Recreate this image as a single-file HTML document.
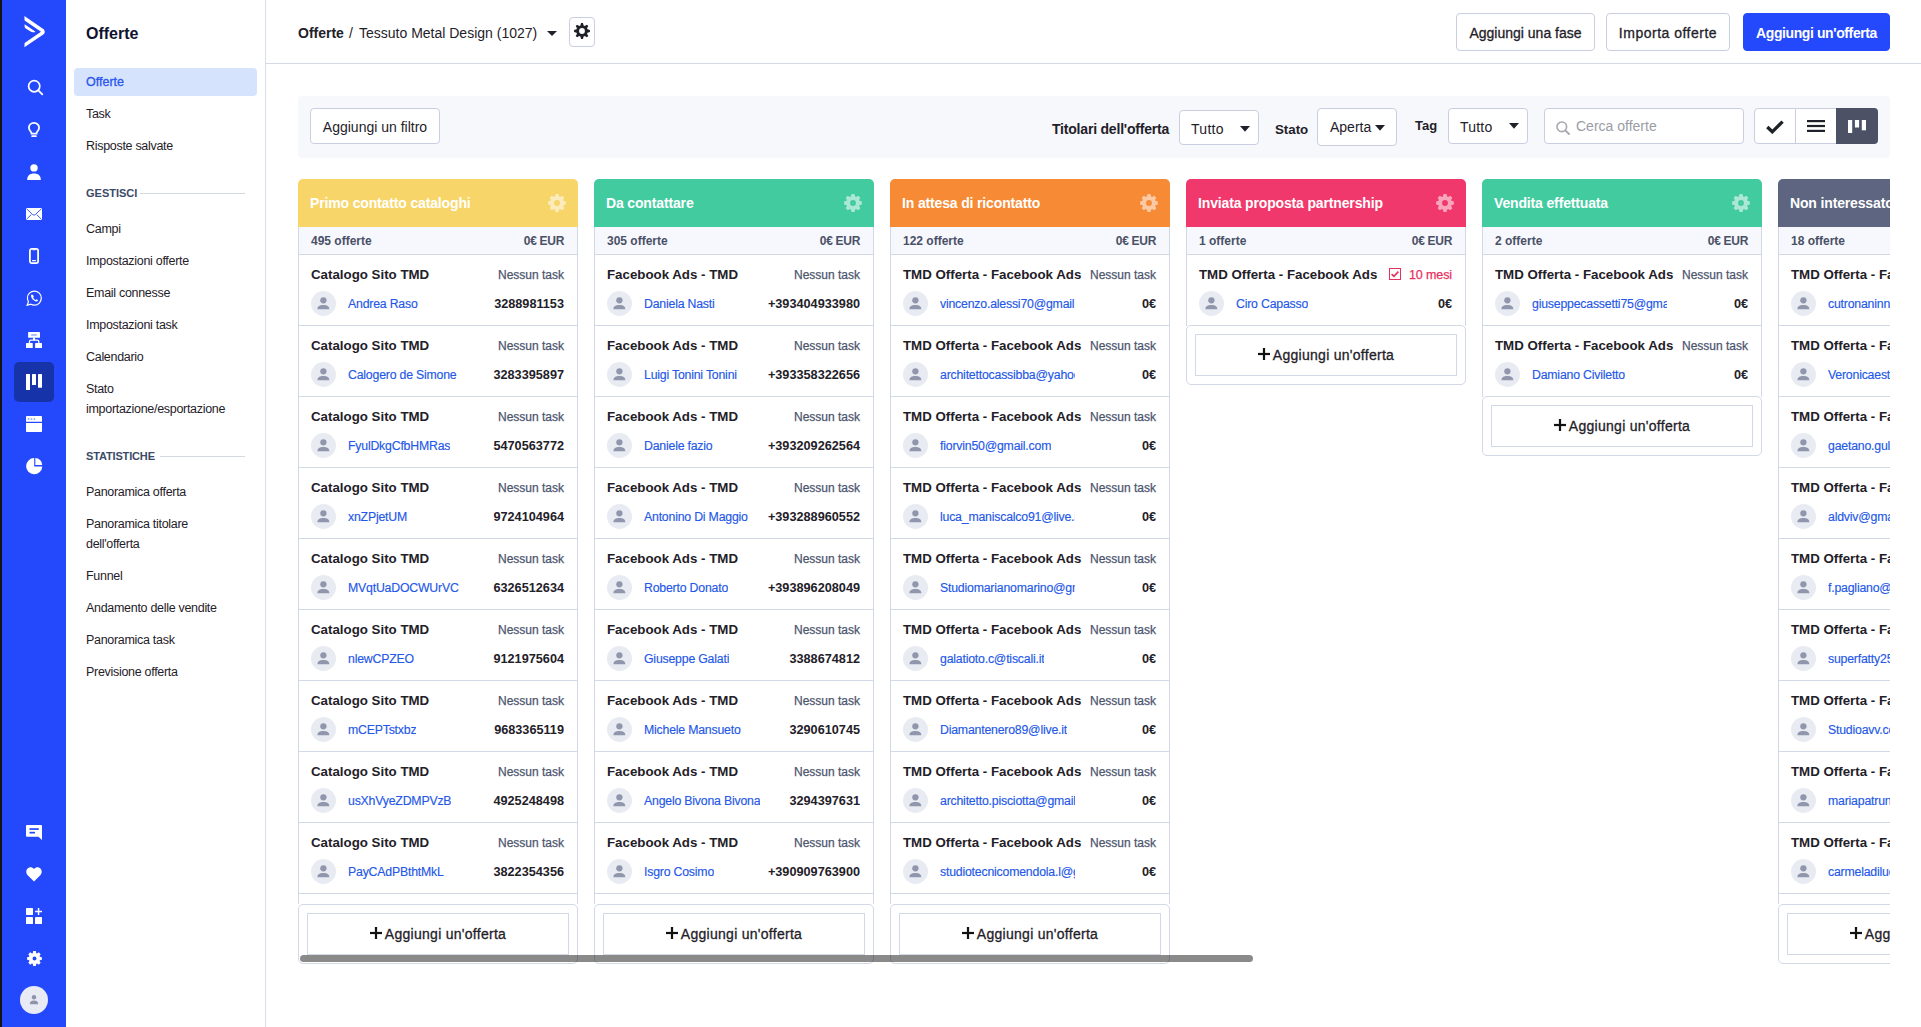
<!DOCTYPE html>
<html><head><meta charset="utf-8"><title>Offerte</title><style>
*{box-sizing:border-box;margin:0;padding:0}
html,body{width:1921px;height:1027px;overflow:hidden;background:#fff;font-family:"Liberation Sans", sans-serif;color:#1f2129}
.abs{position:absolute}
#strip{left:0;top:0;width:2px;height:1027px;background:#141414}
#rail{left:2px;top:0;width:64px;height:1027px;background:#2449fd}
.ri{position:absolute;left:0;width:64px;height:40px;display:flex;align-items:center;justify-content:center}
.ri svg{display:block}
#sub{left:66px;top:0;width:200px;height:1027px;border-right:1px solid #d9dde8;background:#fff}
.nt{position:absolute;left:20px;font-size:12.5px;letter-spacing:-0.3px;color:#1f2129;line-height:20px;white-space:nowrap}
.sec{position:absolute;left:20px;font-size:11px;font-weight:bold;color:#3b4a68;letter-spacing:0px;line-height:14px}
.secl{position:absolute;height:1px;background:#d3d8e3}
#hdr{left:266px;top:0;width:1655px;height:64px;border-bottom:1px solid #d5d9e6}
.btn{position:absolute;border:1px solid #c9cee0;border-radius:4px;background:#fff;font-size:14px;color:#1f2129;display:flex;align-items:center;justify-content:center;white-space:nowrap}
.med{-webkit-text-stroke:0.3px currentColor}
#fbar{left:298px;top:96px;width:1592px;height:62px;background:#f7f8fc;border-radius:4px}
.col{position:absolute;top:179px;width:280px}
.ch{position:absolute;left:0;top:0;width:280px;height:48px;border-radius:5px 5px 0 0;color:#fff;font-weight:bold;font-size:14px;letter-spacing:-0.15px;line-height:48px;padding-left:12px;white-space:nowrap;overflow:hidden}
.ch svg{position:absolute;right:12px;top:15px}
.cb{position:absolute;left:0;top:48px;width:280px;border-left:1px solid #d3d8e6;border-right:1px solid #d3d8e6;overflow:hidden}
.st{height:28px;background:#f7f8fd;border-bottom:1px solid #d3d8e6;position:relative;font-weight:bold;font-size:12px;color:#4a5066}
.st .l{position:absolute;left:12px;top:7px;line-height:14px}
.st .r{position:absolute;right:13px;top:7px;line-height:14px;font-size:12px;letter-spacing:-0.3px}
.cd{height:71px;border-bottom:1px solid #d3d8e6;position:relative;background:#fff}
.cd .t{position:absolute;left:12px;top:12px;font-weight:bold;font-size:13.3px;line-height:16px;white-space:nowrap;color:#1f2129}
.cd .k{position:absolute;right:13px;top:12px;font-size:12px;line-height:16px;color:#4d556e;-webkit-text-stroke:0.25px currentColor;white-space:nowrap;background:#fff}
.cd .av{position:absolute;left:12px;top:36px;width:25px;height:25px;border-radius:50%;background:#e9ebf3}
.cd .av svg{position:absolute;left:0;top:0}
.cd .n{position:absolute;left:49px;top:41px;font-size:12.3px;letter-spacing:-0.2px;line-height:16px;color:#2458e8;-webkit-text-stroke:0.15px currentColor;white-space:nowrap;overflow:hidden;max-width:135px}
.cd .p{position:absolute;right:13px;top:41px;font-weight:bold;font-size:12.7px;line-height:16px;color:#1f2129;white-space:nowrap}
.add{position:absolute;left:0;width:280px;height:60px;border:1px solid #d3d8e6;border-radius:5px;background:#fff}
.add .ib{position:absolute;left:8px;top:8px;width:262px;height:42px;border:1px solid #d3d8e6;display:flex;align-items:center;justify-content:center;font-size:14px;color:#1f2129;white-space:nowrap}
#sb{left:300px;top:955px;width:953px;height:7px;border-radius:4px;background:rgba(0,0,0,0.46)}
</style></head><body>
<div id="strip" class="abs"></div>
<div id="rail" class="abs"></div><svg class="abs" style="left:18px;top:12px" width="32" height="40" viewBox="18 12 32 40"><path d="M24.4,16.1 L44.0,29.5 Q45.6,31.8 44.0,34.1 L24.4,47.3 L24.6,42.9 L41.0,31.8 L24.6,20.6 Z" fill="#fff"/><path d="M24.6,24.3 L34.5,30.9 Q36.0,32.3 34.2,32.3 L32.8,32.3 Q31.6,32.2 30.6,31.6 L25.8,28.4 Q24.6,27.6 24.6,26.6 Z" fill="#fff"/></svg>
<svg class="abs" style="left:27px;top:79px" width="17" height="17" viewBox="0 0 17 17"><circle cx="7.2" cy="7.2" r="5.6" fill="none" stroke="#fff" stroke-width="1.7"/><path d="M11.3,11.3 L15.3,15.3" stroke="#fff" stroke-width="1.9" stroke-linecap="round"/></svg>
<svg class="abs" style="left:28px;top:122px" width="12" height="16" viewBox="0 0 12 16"><path d="M6,0.9 C3,0.9 0.9,3.1 0.9,5.8 C0.9,7.7 2,8.9 3,10 C3.4,10.5 3.5,11 3.5,11.6 L8.5,11.6 C8.5,11 8.6,10.5 9,10 C10,8.9 11.1,7.7 11.1,5.8 C11.1,3.1 9,0.9 6,0.9Z" fill="none" stroke="#fff" stroke-width="1.8"/><rect x="3.3" y="13.3" width="5.4" height="1.8" rx="0.6" fill="#fff"/></svg>
<svg class="abs" style="left:27px;top:164px" width="14" height="16" viewBox="0 0 14 16"><circle cx="7" cy="3.9" r="3.7" fill="#fff"/><path d="M0.2,16 C0.2,11.6 2.9,9.6 7,9.6 C11.1,9.6 13.8,11.6 13.8,16Z" fill="#fff"/></svg>
<svg class="abs" style="left:26px;top:208px" width="16" height="12" viewBox="0 0 16 12"><rect x="0" y="0" width="16" height="12" rx="1" fill="#fff"/><path d="M0.6,0.8 L6.7,6.6 Q8,7.7 9.3,6.6 L15.4,0.8 M0.6,11.2 L5.3,6.6 M15.4,11.2 L10.7,6.6" fill="none" stroke="#2449fd" stroke-width="0.9"/></svg>
<svg class="abs" style="left:29px;top:248px" width="10" height="16" viewBox="0 0 10 16"><rect x="0.9" y="0.9" width="8.2" height="14.2" rx="1.9" fill="none" stroke="#fff" stroke-width="1.8"/><rect x="3.4" y="1.2" width="3.2" height="1.1" rx="0.5" fill="#fff"/><rect x="3" y="12" width="4" height="1.2" rx="0.5" fill="#fff"/></svg>
<svg class="abs" style="left:26px;top:290px" width="16" height="16" viewBox="0 0 16 16"><path d="M8.4,1.1 C4.5,1.1 1.4,4.2 1.4,8 C1.4,9.3 1.8,10.6 2.5,11.7 L1.1,15.3 L4.9,14.2 C5.9,14.8 7.1,15.1 8.4,15.1 C12.3,15.1 15.3,12 15.3,8.1 C15.3,4.2 12.3,1.1 8.4,1.1Z" fill="none" stroke="#fff" stroke-width="1.2"/><path d="M5.8,4.6 C5.2,4.9 4.9,5.6 5.1,6.5 C5.5,8.5 7.5,10.7 9.8,11.4 C10.8,11.7 11.5,11.3 11.8,10.7 L11.9,10.1 L10.4,9.3 L9.7,10 C8.6,9.5 7.6,8.5 7.1,7.4 L7.8,6.7 L7,5.1Z" fill="#fff"/></svg>
<svg class="abs" style="left:26px;top:332px" width="16" height="16" viewBox="0 0 16 16"><rect x="2.1" y="0.1" width="11.9" height="5.7" rx="0.6" fill="#fff"/><rect x="5.1" y="2.2" width="5.7" height="1.5" fill="#94acff"/><rect x="7" y="5.7" width="2" height="2.6" fill="#fff"/><path d="M3.5,11.2 L3.5,9.6 Q3.5,8.2 4.9,8.2 L11.4,8.2 Q12.8,8.2 12.8,9.6 L12.8,11.2" fill="none" stroke="#fff" stroke-width="1.3"/><rect x="0" y="11.1" width="6.75" height="4.9" rx="0.6" fill="#fff"/><rect x="9.1" y="11.1" width="6.9" height="4.9" rx="0.6" fill="#fff"/></svg>
<div class="abs" style="left:14px;top:362px;width:40px;height:40px;border-radius:5px;background:#1633a9"></div>
<svg class="abs" style="left:26px;top:374px" width="16" height="16" viewBox="0 0 16 16"><rect x="0" y="0" width="4" height="16" fill="#fff"/><rect x="6" y="0" width="4" height="11" rx="0.6" fill="#fff"/><rect x="12" y="0" width="4" height="13.7" rx="0.6" fill="#fff"/></svg>
<svg class="abs" style="left:26px;top:416px" width="16" height="16" viewBox="0 0 16 16"><path d="M0.8,0 L15.2,0 Q16,0 16,0.8 L16,5.8 L0,5.8 L0,0.8 Q0,0 0.8,0Z" fill="#fff"/><path d="M0,7.1 L16,7.1 L16,15.2 Q16,16 15.2,16 L0.8,16 Q0,16 0,15.2Z" fill="#fff"/><rect x="1.8" y="2.2" width="1.6" height="1.6" rx="0.4" fill="#7f97ff"/><rect x="4.7" y="2.2" width="1.6" height="1.6" rx="0.4" fill="#7f97ff"/><rect x="7.6" y="2.2" width="1.6" height="1.6" rx="0.4" fill="#7f97ff"/></svg>
<svg class="abs" style="left:26px;top:458px" width="17" height="17" viewBox="0 0 17 17"><path d="M8.2,0.1 L8.2,8.5 L16.3,8.5 A8.1,8.1 0 1 1 8.2,0.1Z" fill="#fff"/><path d="M9.3,0 A7.2,7.2 0 0 1 16.2,6.9 L9.3,6.9Z" fill="#fff"/></svg>
<svg class="abs" style="left:26px;top:825px" width="16" height="15" viewBox="0 0 16 15"><path d="M1,0 L15,0 Q16,0 16,1 L16,15 L12.5,11.8 L1,11.8 Q0,11.8 0,10.8 L0,1 Q0,0 1,0Z" fill="#fff"/><rect x="3.5" y="3.2" width="9.3" height="1.7" fill="#2449fd"/><rect x="3.5" y="6.8" width="5.5" height="1.7" fill="#2449fd"/></svg>
<svg class="abs" style="left:26px;top:867px" width="16" height="15" viewBox="0 0 16 15"><path d="M8,14.4 L1.7,8.2 C-0.3,6.2 -0.1,2.9 1.9,1.2 C3.8,-0.3 6.4,0.2 8,2.1 C9.6,0.2 12.2,-0.3 14.1,1.2 C16.1,2.9 16.3,6.2 14.3,8.2Z" fill="#fff"/></svg>
<svg class="abs" style="left:26px;top:908px" width="16" height="16" viewBox="0 0 16 16"><rect x="0" y="0" width="7" height="7" rx="0.4" fill="#fff"/><rect x="0" y="9" width="7" height="7" rx="0.4" fill="#fff"/><rect x="9" y="9" width="7" height="7" rx="0.4" fill="#fff"/><rect x="11.8" y="0" width="1.5" height="7" fill="#fff"/><rect x="9.1" y="2.75" width="7" height="1.5" fill="#fff"/></svg>
<svg class="abs" style="left:26.5px;top:950.5px" width="15" height="15" viewBox="0 0 16 16"><path fill-rule="evenodd" fill="#fff" d="M6.15,2.29 L6.59,0.12 L9.41,0.12 L9.85,2.29 L10.08,2.37 L10.30,2.46 L10.51,2.55 L10.72,2.65 L12.57,1.44 L14.56,3.43 L13.35,5.28 L13.45,5.49 L13.54,5.70 L13.63,5.92 L13.71,6.15 L15.88,6.59 L15.88,9.41 L13.71,9.85 L13.63,10.08 L13.54,10.30 L13.45,10.51 L13.35,10.72 L14.56,12.57 L12.57,14.56 L10.72,13.35 L10.51,13.45 L10.30,13.54 L10.08,13.63 L9.85,13.71 L9.41,15.88 L6.59,15.88 L6.15,13.71 L5.92,13.63 L5.70,13.54 L5.49,13.45 L5.28,13.35 L3.43,14.56 L1.44,12.57 L2.65,10.72 L2.55,10.51 L2.46,10.30 L2.37,10.08 L2.29,9.85 L0.12,9.41 L0.12,6.59 L2.29,6.15 L2.37,5.92 L2.46,5.70 L2.55,5.49 L2.65,5.28 L1.44,3.43 L3.43,1.44 L5.28,2.65 L5.49,2.55 L5.70,2.46 L5.92,2.37Z M10.1,8 A2.1,2.1 0 1 0 5.9,8 A2.1,2.1 0 1 0 10.1,8Z"/></svg>
<div class="abs" style="left:20px;top:986px;width:28px;height:28px;border-radius:50%;background:#e8ebf4"><svg style="position:absolute;left:8px;top:9px" width="12" height="10" viewBox="0 0 12 10"><circle cx="6" cy="2.3" r="2.2" fill="#8d93a8"/><path d="M1.8,9.3 C1.8,6.6 3.6,5.6 6,5.6 C8.4,5.6 10.2,6.6 10.2,9.3Z" fill="#8d93a8"/></svg></div>
<div id="sub" class="abs"><div class="abs" style="left:20px;top:24px;font-size:16px;font-weight:bold;color:#0f1330;line-height:20px">Offerte</div>
<div class="abs" style="left:8px;top:68px;width:183px;height:28px;border-radius:4px;background:#d6e3fd"></div>
<div class="nt" style="top:71.5px;color:#2a55f0;letter-spacing:0;-webkit-text-stroke:0.3px currentColor">Offerte</div>
<div class="nt" style="top:103.5px">Task</div>
<div class="nt" style="top:135.5px">Risposte salvate</div>
<div class="nt" style="top:218.5px">Campi</div>
<div class="nt" style="top:250.5px">Impostazioni offerte</div>
<div class="nt" style="top:282.5px">Email connesse</div>
<div class="nt" style="top:314.5px">Impostazioni task</div>
<div class="nt" style="top:346.5px">Calendario</div>
<div class="nt" style="top:378.5px">Stato<br>importazione/esportazione</div>
<div class="nt" style="top:481.5px">Panoramica offerta</div>
<div class="nt" style="top:513.5px">Panoramica titolare<br>dell'offerta</div>
<div class="nt" style="top:565.5px">Funnel</div>
<div class="nt" style="top:597.5px">Andamento delle vendite</div>
<div class="nt" style="top:629.5px">Panoramica task</div>
<div class="nt" style="top:661.5px">Previsione offerta</div>
<div class="sec" style="top:186px">GESTISCI</div><div class="secl" style="left:74px;top:193px;width:105px"></div>
<div class="sec" style="top:449px;letter-spacing:-0.15px">STATISTICHE</div><div class="secl" style="left:94px;top:456px;width:85px"></div></div>
<div id="hdr" class="abs"><div class="abs" style="left:32px;top:23px;font-size:14px;font-weight:bold;line-height:20px;color:#1f2129">Offerte</div>
<div class="abs" style="left:83px;top:23px;font-size:14px;line-height:20px;color:#1f2129">/</div>
<div class="abs" style="left:93px;top:23px;font-size:14px;line-height:20px;color:#1f2129">Tessuto Metal Design (1027)</div>
<svg class="abs" style="left:281px;top:31px" width="10" height="5" viewBox="0 0 10 5"><path d="M0,0 L10,0 L5,5Z" fill="#1f2129"/></svg>
<div class="btn" style="left:303px;top:17px;width:26px;height:30px;padding-bottom:2px"><svg width="16" height="16" viewBox="0 0 16 16"><path fill-rule="evenodd" fill="#1f2129" fill-opacity="1" d="M6.35,2.55 L7.06,0.06 L8.94,0.06 L9.65,2.55 L9.92,2.63 L10.18,2.73 L10.44,2.85 L10.69,2.97 L12.95,1.72 L14.28,3.05 L13.03,5.31 L13.15,5.56 L13.27,5.82 L13.37,6.08 L13.45,6.35 L15.94,7.06 L15.94,8.94 L13.45,9.65 L13.37,9.92 L13.27,10.18 L13.15,10.44 L13.03,10.69 L14.28,12.95 L12.95,14.28 L10.69,13.03 L10.44,13.15 L10.18,13.27 L9.92,13.37 L9.65,13.45 L8.94,15.94 L7.06,15.94 L6.35,13.45 L6.08,13.37 L5.82,13.27 L5.56,13.15 L5.31,13.03 L3.05,14.28 L1.72,12.95 L2.97,10.69 L2.85,10.44 L2.73,10.18 L2.63,9.92 L2.55,9.65 L0.06,8.94 L0.06,7.06 L2.55,6.35 L2.63,6.08 L2.73,5.82 L2.85,5.56 L2.97,5.31 L1.72,3.05 L3.05,1.72 L5.31,2.97 L5.56,2.85 L5.82,2.73 L6.08,2.63Z M10.9,8 A2.9,2.9 0 1 0 5.1,8 A2.9,2.9 0 1 0 10.9,8Z"/></svg></div>
<div class="btn" style="left:1190px;top:13px;width:139px;height:38px;padding-top:1px"><span class="med">Aggiungi una fase</span></div>
<div class="btn" style="left:1340px;top:13px;width:124px;height:38px;padding-top:1px"><span class="med" style="letter-spacing:0.5px">Importa offerte</span></div>
<div class="btn" style="left:1477px;top:13px;width:147px;height:38px;background:#2449fd;border-color:#2449fd;color:#fff;font-weight:bold;font-size:14px;letter-spacing:-0.4px;padding-top:1px">Aggiungi un'offerta</div></div>
<div id="fbar" class="abs"><div class="btn" style="left:12px;top:12px;width:130px;height:36px;padding-top:2px">Aggiungi un filtro</div>
<div class="abs" style="left:754px;top:23px;font-size:14px;letter-spacing:-0.2px;font-weight:bold;line-height:20px;color:#1f2129">Titolari dell'offerta</div>
<div class="btn" style="left:881px;top:14px;width:80px;height:35px;justify-content:flex-start;padding-left:11px;padding-top:2px;letter-spacing:0.3px">Tutto<svg class="abs" width="10" height="6" viewBox="0 0 10 6" style="right:8px;top:15px"><path d="M0,0 L10,0 L5,5.8Z" fill="#1f2129"/></svg></div>
<div class="abs" style="left:977px;top:24px;font-size:13.3px;font-weight:bold;line-height:20px;color:#1f2129">Stato</div>
<div class="btn" style="left:1019px;top:12px;width:80px;height:38px;justify-content:flex-start;padding-left:12px">Aperta<svg class="abs" width="10" height="6" viewBox="0 0 10 6" style="right:11px;top:16px"><path d="M0,0 L10,0 L5,5.8Z" fill="#1f2129"/></svg></div>
<div class="abs" style="left:1117px;top:20px;font-size:13px;font-weight:bold;line-height:20px;color:#1f2129">Tag</div>
<div class="btn" style="left:1150px;top:12px;width:80px;height:36px;justify-content:flex-start;padding-left:11px;padding-top:1px;letter-spacing:0.2px">Tutto<svg class="abs" width="10" height="6" viewBox="0 0 10 6" style="right:8px;top:14px"><path d="M0,0 L10,0 L5,5.8Z" fill="#1f2129"/></svg></div>
<div class="btn" style="left:1246px;top:12px;width:200px;height:36px;justify-content:flex-start;padding-left:31px;color:#9a9da6">Cerca offerte<svg class="abs" style="left:11px;top:12px" width="14" height="14" viewBox="0 0 14 14"><circle cx="5.8" cy="5.8" r="4.8" fill="none" stroke="#a6a8ae" stroke-width="1.6"/><path d="M9.3,9.3 L13,13" stroke="#a6a8ae" stroke-width="1.9" stroke-linecap="round"/></svg></div>
<div class="abs" style="left:1456px;top:12px;width:124px;height:36px;border:1px solid #c9cee0;border-radius:4px;background:#fff"></div><div class="abs" style="left:1497px;top:12px;width:1px;height:36px;background:#c9cee0"></div><div class="abs" style="left:1538px;top:12px;width:42px;height:36px;background:#4c5166;border-radius:0 4px 4px 0"></div><svg class="abs" style="left:1468px;top:24px" width="18" height="14" viewBox="0 0 18 14"><path d="M1.3,7 L6.3,11.8 L16.6,1.6" fill="none" stroke="#1f2129" stroke-width="3.3"/></svg><svg class="abs" style="left:1509px;top:24px" width="18" height="12" viewBox="0 0 18 12"><rect x="0" y="0" width="18" height="2.2" fill="#1f2129"/><rect x="0" y="4.9" width="18" height="2.2" fill="#1f2129"/><rect x="0" y="9.8" width="18" height="2.2" fill="#1f2129"/></svg><svg class="abs" style="left:1550px;top:24px" width="18" height="13" viewBox="0 0 18 13"><rect x="0" y="0" width="4.2" height="13" fill="#fff"/><rect x="6.9" y="0" width="4.2" height="7.5" fill="#fff"/><rect x="13.8" y="0" width="4.2" height="10.3" fill="#fff"/></svg></div>
<div class="abs" style="left:298px;top:170px;width:1592px;height:810px;overflow:hidden"><div class="abs" style="left:-298px;top:-170px;width:2000px;height:1000px">
<div class="col" style="left:298px">
<div class="ch" style="background:#f8d568">Primo contatto cataloghi<svg width="18" height="18" viewBox="0 0 16 16"><path fill-rule="evenodd" fill="#fff" fill-opacity="0.55" d="M6.11,2.20 L6.69,0.11 L9.31,0.11 L9.89,2.20 L10.11,2.28 L10.33,2.36 L10.55,2.46 L10.77,2.56 L12.65,1.49 L14.51,3.35 L13.44,5.23 L13.54,5.45 L13.64,5.67 L13.72,5.89 L13.80,6.11 L15.89,6.69 L15.89,9.31 L13.80,9.89 L13.72,10.11 L13.64,10.33 L13.54,10.55 L13.44,10.77 L14.51,12.65 L12.65,14.51 L10.77,13.44 L10.55,13.54 L10.33,13.64 L10.11,13.72 L9.89,13.80 L9.31,15.89 L6.69,15.89 L6.11,13.80 L5.89,13.72 L5.67,13.64 L5.45,13.54 L5.23,13.44 L3.35,14.51 L1.49,12.65 L2.56,10.77 L2.46,10.55 L2.36,10.33 L2.28,10.11 L2.20,9.89 L0.11,9.31 L0.11,6.69 L2.20,6.11 L2.28,5.89 L2.36,5.67 L2.46,5.45 L2.56,5.23 L1.49,3.35 L3.35,1.49 L5.23,2.56 L5.45,2.46 L5.67,2.36 L5.89,2.28Z M10.6,8 A2.6,2.6 0 1 0 5.4,8 A2.6,2.6 0 1 0 10.6,8Z"/></svg></div>
<div class="cb" style="height:677px">
<div class="st"><span class="l">495 offerte</span><span class="r">0€ EUR</span></div>
<div class="cd"><span class="t">Catalogo Sito TMD</span><span class="k">Nessun task</span><span class="av"><svg width="25" height="25" viewBox="0 0 25 25"><circle cx="12.4" cy="9.3" r="3.15" fill="#9096ab"/><path d="M6.4,18.3 C6.4,15.2 8.8,14.0 12.4,14.0 C16.0,14.0 18.3,15.2 18.3,18.3 Z" fill="#9096ab"/></svg></span><span class="n">Andrea Raso</span><span class="p">3288981153</span></div>
<div class="cd"><span class="t">Catalogo Sito TMD</span><span class="k">Nessun task</span><span class="av"><svg width="25" height="25" viewBox="0 0 25 25"><circle cx="12.4" cy="9.3" r="3.15" fill="#9096ab"/><path d="M6.4,18.3 C6.4,15.2 8.8,14.0 12.4,14.0 C16.0,14.0 18.3,15.2 18.3,18.3 Z" fill="#9096ab"/></svg></span><span class="n">Calogero de Simone</span><span class="p">3283395897</span></div>
<div class="cd"><span class="t">Catalogo Sito TMD</span><span class="k">Nessun task</span><span class="av"><svg width="25" height="25" viewBox="0 0 25 25"><circle cx="12.4" cy="9.3" r="3.15" fill="#9096ab"/><path d="M6.4,18.3 C6.4,15.2 8.8,14.0 12.4,14.0 C16.0,14.0 18.3,15.2 18.3,18.3 Z" fill="#9096ab"/></svg></span><span class="n">FyulDkgCfbHMRas</span><span class="p">5470563772</span></div>
<div class="cd"><span class="t">Catalogo Sito TMD</span><span class="k">Nessun task</span><span class="av"><svg width="25" height="25" viewBox="0 0 25 25"><circle cx="12.4" cy="9.3" r="3.15" fill="#9096ab"/><path d="M6.4,18.3 C6.4,15.2 8.8,14.0 12.4,14.0 C16.0,14.0 18.3,15.2 18.3,18.3 Z" fill="#9096ab"/></svg></span><span class="n">xnZPjetUM</span><span class="p">9724104964</span></div>
<div class="cd"><span class="t">Catalogo Sito TMD</span><span class="k">Nessun task</span><span class="av"><svg width="25" height="25" viewBox="0 0 25 25"><circle cx="12.4" cy="9.3" r="3.15" fill="#9096ab"/><path d="M6.4,18.3 C6.4,15.2 8.8,14.0 12.4,14.0 C16.0,14.0 18.3,15.2 18.3,18.3 Z" fill="#9096ab"/></svg></span><span class="n">MVqtUaDOCWUrVC</span><span class="p">6326512634</span></div>
<div class="cd"><span class="t">Catalogo Sito TMD</span><span class="k">Nessun task</span><span class="av"><svg width="25" height="25" viewBox="0 0 25 25"><circle cx="12.4" cy="9.3" r="3.15" fill="#9096ab"/><path d="M6.4,18.3 C6.4,15.2 8.8,14.0 12.4,14.0 C16.0,14.0 18.3,15.2 18.3,18.3 Z" fill="#9096ab"/></svg></span><span class="n">nlewCPZEO</span><span class="p">9121975604</span></div>
<div class="cd"><span class="t">Catalogo Sito TMD</span><span class="k">Nessun task</span><span class="av"><svg width="25" height="25" viewBox="0 0 25 25"><circle cx="12.4" cy="9.3" r="3.15" fill="#9096ab"/><path d="M6.4,18.3 C6.4,15.2 8.8,14.0 12.4,14.0 C16.0,14.0 18.3,15.2 18.3,18.3 Z" fill="#9096ab"/></svg></span><span class="n">mCEPTstxbz</span><span class="p">9683365119</span></div>
<div class="cd"><span class="t">Catalogo Sito TMD</span><span class="k">Nessun task</span><span class="av"><svg width="25" height="25" viewBox="0 0 25 25"><circle cx="12.4" cy="9.3" r="3.15" fill="#9096ab"/><path d="M6.4,18.3 C6.4,15.2 8.8,14.0 12.4,14.0 C16.0,14.0 18.3,15.2 18.3,18.3 Z" fill="#9096ab"/></svg></span><span class="n">usXhVyeZDMPVzB</span><span class="p">4925248498</span></div>
<div class="cd"><span class="t">Catalogo Sito TMD</span><span class="k">Nessun task</span><span class="av"><svg width="25" height="25" viewBox="0 0 25 25"><circle cx="12.4" cy="9.3" r="3.15" fill="#9096ab"/><path d="M6.4,18.3 C6.4,15.2 8.8,14.0 12.4,14.0 C16.0,14.0 18.3,15.2 18.3,18.3 Z" fill="#9096ab"/></svg></span><span class="n">PayCAdPBthtMkL</span><span class="p">3822354356</span></div>
</div>
<div class="add" style="top:725px"><div class="ib"><svg width="12" height="12" viewBox="0 0 12 12" style="margin-right:3px;position:relative;top:-1px"><rect x="4.9" y="0" width="2.2" height="12" fill="#111"/><rect x="0" y="4.9" width="12" height="2.2" fill="#111"/></svg><span class="med" style="letter-spacing:0.28px">Aggiungi un'offerta</span></div></div>
</div>
<div class="col" style="left:594px">
<div class="ch" style="background:#43cba0">Da contattare<svg width="18" height="18" viewBox="0 0 16 16"><path fill-rule="evenodd" fill="#fff" fill-opacity="0.55" d="M6.11,2.20 L6.69,0.11 L9.31,0.11 L9.89,2.20 L10.11,2.28 L10.33,2.36 L10.55,2.46 L10.77,2.56 L12.65,1.49 L14.51,3.35 L13.44,5.23 L13.54,5.45 L13.64,5.67 L13.72,5.89 L13.80,6.11 L15.89,6.69 L15.89,9.31 L13.80,9.89 L13.72,10.11 L13.64,10.33 L13.54,10.55 L13.44,10.77 L14.51,12.65 L12.65,14.51 L10.77,13.44 L10.55,13.54 L10.33,13.64 L10.11,13.72 L9.89,13.80 L9.31,15.89 L6.69,15.89 L6.11,13.80 L5.89,13.72 L5.67,13.64 L5.45,13.54 L5.23,13.44 L3.35,14.51 L1.49,12.65 L2.56,10.77 L2.46,10.55 L2.36,10.33 L2.28,10.11 L2.20,9.89 L0.11,9.31 L0.11,6.69 L2.20,6.11 L2.28,5.89 L2.36,5.67 L2.46,5.45 L2.56,5.23 L1.49,3.35 L3.35,1.49 L5.23,2.56 L5.45,2.46 L5.67,2.36 L5.89,2.28Z M10.6,8 A2.6,2.6 0 1 0 5.4,8 A2.6,2.6 0 1 0 10.6,8Z"/></svg></div>
<div class="cb" style="height:677px">
<div class="st"><span class="l">305 offerte</span><span class="r">0€ EUR</span></div>
<div class="cd"><span class="t">Facebook Ads - TMD</span><span class="k">Nessun task</span><span class="av"><svg width="25" height="25" viewBox="0 0 25 25"><circle cx="12.4" cy="9.3" r="3.15" fill="#9096ab"/><path d="M6.4,18.3 C6.4,15.2 8.8,14.0 12.4,14.0 C16.0,14.0 18.3,15.2 18.3,18.3 Z" fill="#9096ab"/></svg></span><span class="n">Daniela Nasti</span><span class="p">+393404933980</span></div>
<div class="cd"><span class="t">Facebook Ads - TMD</span><span class="k">Nessun task</span><span class="av"><svg width="25" height="25" viewBox="0 0 25 25"><circle cx="12.4" cy="9.3" r="3.15" fill="#9096ab"/><path d="M6.4,18.3 C6.4,15.2 8.8,14.0 12.4,14.0 C16.0,14.0 18.3,15.2 18.3,18.3 Z" fill="#9096ab"/></svg></span><span class="n">Luigi Tonini Tonini</span><span class="p">+393358322656</span></div>
<div class="cd"><span class="t">Facebook Ads - TMD</span><span class="k">Nessun task</span><span class="av"><svg width="25" height="25" viewBox="0 0 25 25"><circle cx="12.4" cy="9.3" r="3.15" fill="#9096ab"/><path d="M6.4,18.3 C6.4,15.2 8.8,14.0 12.4,14.0 C16.0,14.0 18.3,15.2 18.3,18.3 Z" fill="#9096ab"/></svg></span><span class="n">Daniele fazio</span><span class="p">+393209262564</span></div>
<div class="cd"><span class="t">Facebook Ads - TMD</span><span class="k">Nessun task</span><span class="av"><svg width="25" height="25" viewBox="0 0 25 25"><circle cx="12.4" cy="9.3" r="3.15" fill="#9096ab"/><path d="M6.4,18.3 C6.4,15.2 8.8,14.0 12.4,14.0 C16.0,14.0 18.3,15.2 18.3,18.3 Z" fill="#9096ab"/></svg></span><span class="n">Antonino Di Maggio</span><span class="p">+393288960552</span></div>
<div class="cd"><span class="t">Facebook Ads - TMD</span><span class="k">Nessun task</span><span class="av"><svg width="25" height="25" viewBox="0 0 25 25"><circle cx="12.4" cy="9.3" r="3.15" fill="#9096ab"/><path d="M6.4,18.3 C6.4,15.2 8.8,14.0 12.4,14.0 C16.0,14.0 18.3,15.2 18.3,18.3 Z" fill="#9096ab"/></svg></span><span class="n">Roberto Donato</span><span class="p">+393896208049</span></div>
<div class="cd"><span class="t">Facebook Ads - TMD</span><span class="k">Nessun task</span><span class="av"><svg width="25" height="25" viewBox="0 0 25 25"><circle cx="12.4" cy="9.3" r="3.15" fill="#9096ab"/><path d="M6.4,18.3 C6.4,15.2 8.8,14.0 12.4,14.0 C16.0,14.0 18.3,15.2 18.3,18.3 Z" fill="#9096ab"/></svg></span><span class="n">Giuseppe Galati</span><span class="p">3388674812</span></div>
<div class="cd"><span class="t">Facebook Ads - TMD</span><span class="k">Nessun task</span><span class="av"><svg width="25" height="25" viewBox="0 0 25 25"><circle cx="12.4" cy="9.3" r="3.15" fill="#9096ab"/><path d="M6.4,18.3 C6.4,15.2 8.8,14.0 12.4,14.0 C16.0,14.0 18.3,15.2 18.3,18.3 Z" fill="#9096ab"/></svg></span><span class="n">Michele Mansueto</span><span class="p">3290610745</span></div>
<div class="cd"><span class="t">Facebook Ads - TMD</span><span class="k">Nessun task</span><span class="av"><svg width="25" height="25" viewBox="0 0 25 25"><circle cx="12.4" cy="9.3" r="3.15" fill="#9096ab"/><path d="M6.4,18.3 C6.4,15.2 8.8,14.0 12.4,14.0 C16.0,14.0 18.3,15.2 18.3,18.3 Z" fill="#9096ab"/></svg></span><span class="n">Angelo Bivona Bivona</span><span class="p">3294397631</span></div>
<div class="cd"><span class="t">Facebook Ads - TMD</span><span class="k">Nessun task</span><span class="av"><svg width="25" height="25" viewBox="0 0 25 25"><circle cx="12.4" cy="9.3" r="3.15" fill="#9096ab"/><path d="M6.4,18.3 C6.4,15.2 8.8,14.0 12.4,14.0 C16.0,14.0 18.3,15.2 18.3,18.3 Z" fill="#9096ab"/></svg></span><span class="n">Isgro Cosimo</span><span class="p">+390909763900</span></div>
</div>
<div class="add" style="top:725px"><div class="ib"><svg width="12" height="12" viewBox="0 0 12 12" style="margin-right:3px;position:relative;top:-1px"><rect x="4.9" y="0" width="2.2" height="12" fill="#111"/><rect x="0" y="4.9" width="12" height="2.2" fill="#111"/></svg><span class="med" style="letter-spacing:0.28px">Aggiungi un'offerta</span></div></div>
</div>
<div class="col" style="left:890px">
<div class="ch" style="background:#f68a35">In attesa di ricontatto<svg width="18" height="18" viewBox="0 0 16 16"><path fill-rule="evenodd" fill="#fff" fill-opacity="0.55" d="M6.11,2.20 L6.69,0.11 L9.31,0.11 L9.89,2.20 L10.11,2.28 L10.33,2.36 L10.55,2.46 L10.77,2.56 L12.65,1.49 L14.51,3.35 L13.44,5.23 L13.54,5.45 L13.64,5.67 L13.72,5.89 L13.80,6.11 L15.89,6.69 L15.89,9.31 L13.80,9.89 L13.72,10.11 L13.64,10.33 L13.54,10.55 L13.44,10.77 L14.51,12.65 L12.65,14.51 L10.77,13.44 L10.55,13.54 L10.33,13.64 L10.11,13.72 L9.89,13.80 L9.31,15.89 L6.69,15.89 L6.11,13.80 L5.89,13.72 L5.67,13.64 L5.45,13.54 L5.23,13.44 L3.35,14.51 L1.49,12.65 L2.56,10.77 L2.46,10.55 L2.36,10.33 L2.28,10.11 L2.20,9.89 L0.11,9.31 L0.11,6.69 L2.20,6.11 L2.28,5.89 L2.36,5.67 L2.46,5.45 L2.56,5.23 L1.49,3.35 L3.35,1.49 L5.23,2.56 L5.45,2.46 L5.67,2.36 L5.89,2.28Z M10.6,8 A2.6,2.6 0 1 0 5.4,8 A2.6,2.6 0 1 0 10.6,8Z"/></svg></div>
<div class="cb" style="height:677px">
<div class="st"><span class="l">122 offerte</span><span class="r">0€ EUR</span></div>
<div class="cd"><span class="t">TMD Offerta - Facebook Ads</span><span class="k">Nessun task</span><span class="av"><svg width="25" height="25" viewBox="0 0 25 25"><circle cx="12.4" cy="9.3" r="3.15" fill="#9096ab"/><path d="M6.4,18.3 C6.4,15.2 8.8,14.0 12.4,14.0 C16.0,14.0 18.3,15.2 18.3,18.3 Z" fill="#9096ab"/></svg></span><span class="n">vincenzo.alessi70@gmail.com</span><span class="p">0€</span></div>
<div class="cd"><span class="t">TMD Offerta - Facebook Ads</span><span class="k">Nessun task</span><span class="av"><svg width="25" height="25" viewBox="0 0 25 25"><circle cx="12.4" cy="9.3" r="3.15" fill="#9096ab"/><path d="M6.4,18.3 C6.4,15.2 8.8,14.0 12.4,14.0 C16.0,14.0 18.3,15.2 18.3,18.3 Z" fill="#9096ab"/></svg></span><span class="n">architettocassibba@yahoo.it</span><span class="p">0€</span></div>
<div class="cd"><span class="t">TMD Offerta - Facebook Ads</span><span class="k">Nessun task</span><span class="av"><svg width="25" height="25" viewBox="0 0 25 25"><circle cx="12.4" cy="9.3" r="3.15" fill="#9096ab"/><path d="M6.4,18.3 C6.4,15.2 8.8,14.0 12.4,14.0 C16.0,14.0 18.3,15.2 18.3,18.3 Z" fill="#9096ab"/></svg></span><span class="n">fiorvin50@gmail.com</span><span class="p">0€</span></div>
<div class="cd"><span class="t">TMD Offerta - Facebook Ads</span><span class="k">Nessun task</span><span class="av"><svg width="25" height="25" viewBox="0 0 25 25"><circle cx="12.4" cy="9.3" r="3.15" fill="#9096ab"/><path d="M6.4,18.3 C6.4,15.2 8.8,14.0 12.4,14.0 C16.0,14.0 18.3,15.2 18.3,18.3 Z" fill="#9096ab"/></svg></span><span class="n">luca_maniscalco91@live.it</span><span class="p">0€</span></div>
<div class="cd"><span class="t">TMD Offerta - Facebook Ads</span><span class="k">Nessun task</span><span class="av"><svg width="25" height="25" viewBox="0 0 25 25"><circle cx="12.4" cy="9.3" r="3.15" fill="#9096ab"/><path d="M6.4,18.3 C6.4,15.2 8.8,14.0 12.4,14.0 C16.0,14.0 18.3,15.2 18.3,18.3 Z" fill="#9096ab"/></svg></span><span class="n">Studiomarianomarino@gmail.com</span><span class="p">0€</span></div>
<div class="cd"><span class="t">TMD Offerta - Facebook Ads</span><span class="k">Nessun task</span><span class="av"><svg width="25" height="25" viewBox="0 0 25 25"><circle cx="12.4" cy="9.3" r="3.15" fill="#9096ab"/><path d="M6.4,18.3 C6.4,15.2 8.8,14.0 12.4,14.0 C16.0,14.0 18.3,15.2 18.3,18.3 Z" fill="#9096ab"/></svg></span><span class="n">galatioto.c@tiscali.it</span><span class="p">0€</span></div>
<div class="cd"><span class="t">TMD Offerta - Facebook Ads</span><span class="k">Nessun task</span><span class="av"><svg width="25" height="25" viewBox="0 0 25 25"><circle cx="12.4" cy="9.3" r="3.15" fill="#9096ab"/><path d="M6.4,18.3 C6.4,15.2 8.8,14.0 12.4,14.0 C16.0,14.0 18.3,15.2 18.3,18.3 Z" fill="#9096ab"/></svg></span><span class="n">Diamantenero89@live.it</span><span class="p">0€</span></div>
<div class="cd"><span class="t">TMD Offerta - Facebook Ads</span><span class="k">Nessun task</span><span class="av"><svg width="25" height="25" viewBox="0 0 25 25"><circle cx="12.4" cy="9.3" r="3.15" fill="#9096ab"/><path d="M6.4,18.3 C6.4,15.2 8.8,14.0 12.4,14.0 C16.0,14.0 18.3,15.2 18.3,18.3 Z" fill="#9096ab"/></svg></span><span class="n">architetto.pisciotta@gmail.com</span><span class="p">0€</span></div>
<div class="cd"><span class="t">TMD Offerta - Facebook Ads</span><span class="k">Nessun task</span><span class="av"><svg width="25" height="25" viewBox="0 0 25 25"><circle cx="12.4" cy="9.3" r="3.15" fill="#9096ab"/><path d="M6.4,18.3 C6.4,15.2 8.8,14.0 12.4,14.0 C16.0,14.0 18.3,15.2 18.3,18.3 Z" fill="#9096ab"/></svg></span><span class="n">studiotecnicomendola.l@gmail.com</span><span class="p">0€</span></div>
</div>
<div class="add" style="top:725px"><div class="ib"><svg width="12" height="12" viewBox="0 0 12 12" style="margin-right:3px;position:relative;top:-1px"><rect x="4.9" y="0" width="2.2" height="12" fill="#111"/><rect x="0" y="4.9" width="12" height="2.2" fill="#111"/></svg><span class="med" style="letter-spacing:0.28px">Aggiungi un'offerta</span></div></div>
</div>
<div class="col" style="left:1186px">
<div class="ch" style="background:#f0386c">Inviata proposta partnership<svg width="18" height="18" viewBox="0 0 16 16"><path fill-rule="evenodd" fill="#fff" fill-opacity="0.55" d="M6.11,2.20 L6.69,0.11 L9.31,0.11 L9.89,2.20 L10.11,2.28 L10.33,2.36 L10.55,2.46 L10.77,2.56 L12.65,1.49 L14.51,3.35 L13.44,5.23 L13.54,5.45 L13.64,5.67 L13.72,5.89 L13.80,6.11 L15.89,6.69 L15.89,9.31 L13.80,9.89 L13.72,10.11 L13.64,10.33 L13.54,10.55 L13.44,10.77 L14.51,12.65 L12.65,14.51 L10.77,13.44 L10.55,13.54 L10.33,13.64 L10.11,13.72 L9.89,13.80 L9.31,15.89 L6.69,15.89 L6.11,13.80 L5.89,13.72 L5.67,13.64 L5.45,13.54 L5.23,13.44 L3.35,14.51 L1.49,12.65 L2.56,10.77 L2.46,10.55 L2.36,10.33 L2.28,10.11 L2.20,9.89 L0.11,9.31 L0.11,6.69 L2.20,6.11 L2.28,5.89 L2.36,5.67 L2.46,5.45 L2.56,5.23 L1.49,3.35 L3.35,1.49 L5.23,2.56 L5.45,2.46 L5.67,2.36 L5.89,2.28Z M10.6,8 A2.6,2.6 0 1 0 5.4,8 A2.6,2.6 0 1 0 10.6,8Z"/></svg></div>
<div class="cb" style="height:99px">
<div class="st"><span class="l">1 offerte</span><span class="r">0€ EUR</span></div>
<div class="cd" style="border-bottom:none;height:70px"><span class="t">TMD Offerta - Facebook Ads</span><span class="k" style="color:#e8305e"><svg width="12" height="12" viewBox="0 0 12 12" style="vertical-align:-1px;margin-right:8px"><rect x="0.5" y="0.5" width="11" height="11" fill="none" stroke="#e8305e" stroke-width="1"/><path d="M2.6,6.2 L4.9,8.4 L9.4,3.6" fill="none" stroke="#e8305e" stroke-width="1.6"/></svg><span style="font-size:12.5px;letter-spacing:-0.1px">10 mesi</span></span><span class="av"><svg width="25" height="25" viewBox="0 0 25 25"><circle cx="12.4" cy="9.3" r="3.15" fill="#9096ab"/><path d="M6.4,18.3 C6.4,15.2 8.8,14.0 12.4,14.0 C16.0,14.0 18.3,15.2 18.3,18.3 Z" fill="#9096ab"/></svg></span><span class="n">Ciro Capasso</span><span class="p">0€</span></div>
</div>
<div class="add" style="top:146px"><div class="ib"><svg width="12" height="12" viewBox="0 0 12 12" style="margin-right:3px;position:relative;top:-1px"><rect x="4.9" y="0" width="2.2" height="12" fill="#111"/><rect x="0" y="4.9" width="12" height="2.2" fill="#111"/></svg><span class="med" style="letter-spacing:0.28px">Aggiungi un'offerta</span></div></div>
</div>
<div class="col" style="left:1482px">
<div class="ch" style="background:#43cba0">Vendita effettuata<svg width="18" height="18" viewBox="0 0 16 16"><path fill-rule="evenodd" fill="#fff" fill-opacity="0.55" d="M6.11,2.20 L6.69,0.11 L9.31,0.11 L9.89,2.20 L10.11,2.28 L10.33,2.36 L10.55,2.46 L10.77,2.56 L12.65,1.49 L14.51,3.35 L13.44,5.23 L13.54,5.45 L13.64,5.67 L13.72,5.89 L13.80,6.11 L15.89,6.69 L15.89,9.31 L13.80,9.89 L13.72,10.11 L13.64,10.33 L13.54,10.55 L13.44,10.77 L14.51,12.65 L12.65,14.51 L10.77,13.44 L10.55,13.54 L10.33,13.64 L10.11,13.72 L9.89,13.80 L9.31,15.89 L6.69,15.89 L6.11,13.80 L5.89,13.72 L5.67,13.64 L5.45,13.54 L5.23,13.44 L3.35,14.51 L1.49,12.65 L2.56,10.77 L2.46,10.55 L2.36,10.33 L2.28,10.11 L2.20,9.89 L0.11,9.31 L0.11,6.69 L2.20,6.11 L2.28,5.89 L2.36,5.67 L2.46,5.45 L2.56,5.23 L1.49,3.35 L3.35,1.49 L5.23,2.56 L5.45,2.46 L5.67,2.36 L5.89,2.28Z M10.6,8 A2.6,2.6 0 1 0 5.4,8 A2.6,2.6 0 1 0 10.6,8Z"/></svg></div>
<div class="cb" style="height:170px">
<div class="st"><span class="l">2 offerte</span><span class="r">0€ EUR</span></div>
<div class="cd"><span class="t">TMD Offerta - Facebook Ads</span><span class="k">Nessun task</span><span class="av"><svg width="25" height="25" viewBox="0 0 25 25"><circle cx="12.4" cy="9.3" r="3.15" fill="#9096ab"/><path d="M6.4,18.3 C6.4,15.2 8.8,14.0 12.4,14.0 C16.0,14.0 18.3,15.2 18.3,18.3 Z" fill="#9096ab"/></svg></span><span class="n">giuseppecassetti75@gmail.com</span><span class="p">0€</span></div>
<div class="cd" style="border-bottom:none;height:70px"><span class="t">TMD Offerta - Facebook Ads</span><span class="k">Nessun task</span><span class="av"><svg width="25" height="25" viewBox="0 0 25 25"><circle cx="12.4" cy="9.3" r="3.15" fill="#9096ab"/><path d="M6.4,18.3 C6.4,15.2 8.8,14.0 12.4,14.0 C16.0,14.0 18.3,15.2 18.3,18.3 Z" fill="#9096ab"/></svg></span><span class="n">Damiano Civiletto</span><span class="p">0€</span></div>
</div>
<div class="add" style="top:217px"><div class="ib"><svg width="12" height="12" viewBox="0 0 12 12" style="margin-right:3px;position:relative;top:-1px"><rect x="4.9" y="0" width="2.2" height="12" fill="#111"/><rect x="0" y="4.9" width="12" height="2.2" fill="#111"/></svg><span class="med" style="letter-spacing:0.28px">Aggiungi un'offerta</span></div></div>
</div>
<div class="col" style="left:1778px">
<div class="ch" style="background:#5d6580">Non interessato</div>
<div class="cb" style="height:677px">
<div class="st"><span class="l">18 offerte</span><span class="r">0€ EUR</span></div>
<div class="cd"><span class="t">TMD Offerta - Facebook Ads</span><span class="k">Nessun task</span><span class="av"><svg width="25" height="25" viewBox="0 0 25 25"><circle cx="12.4" cy="9.3" r="3.15" fill="#9096ab"/><path d="M6.4,18.3 C6.4,15.2 8.8,14.0 12.4,14.0 C16.0,14.0 18.3,15.2 18.3,18.3 Z" fill="#9096ab"/></svg></span><span class="n">cutronaninni@gmail.com</span><span class="p">0€</span></div>
<div class="cd"><span class="t">TMD Offerta - Facebook Ads</span><span class="k">Nessun task</span><span class="av"><svg width="25" height="25" viewBox="0 0 25 25"><circle cx="12.4" cy="9.3" r="3.15" fill="#9096ab"/><path d="M6.4,18.3 C6.4,15.2 8.8,14.0 12.4,14.0 C16.0,14.0 18.3,15.2 18.3,18.3 Z" fill="#9096ab"/></svg></span><span class="n">Veronicaesteban@gmail.com</span><span class="p">0€</span></div>
<div class="cd"><span class="t">TMD Offerta - Facebook Ads</span><span class="k">Nessun task</span><span class="av"><svg width="25" height="25" viewBox="0 0 25 25"><circle cx="12.4" cy="9.3" r="3.15" fill="#9096ab"/><path d="M6.4,18.3 C6.4,15.2 8.8,14.0 12.4,14.0 C16.0,14.0 18.3,15.2 18.3,18.3 Z" fill="#9096ab"/></svg></span><span class="n">gaetano.gulotta@gmail.com</span><span class="p">0€</span></div>
<div class="cd"><span class="t">TMD Offerta - Facebook Ads</span><span class="k">Nessun task</span><span class="av"><svg width="25" height="25" viewBox="0 0 25 25"><circle cx="12.4" cy="9.3" r="3.15" fill="#9096ab"/><path d="M6.4,18.3 C6.4,15.2 8.8,14.0 12.4,14.0 C16.0,14.0 18.3,15.2 18.3,18.3 Z" fill="#9096ab"/></svg></span><span class="n">aldviv@gmail.com</span><span class="p">0€</span></div>
<div class="cd"><span class="t">TMD Offerta - Facebook Ads</span><span class="k">Nessun task</span><span class="av"><svg width="25" height="25" viewBox="0 0 25 25"><circle cx="12.4" cy="9.3" r="3.15" fill="#9096ab"/><path d="M6.4,18.3 C6.4,15.2 8.8,14.0 12.4,14.0 C16.0,14.0 18.3,15.2 18.3,18.3 Z" fill="#9096ab"/></svg></span><span class="n">f.pagliano@gmail.com</span><span class="p">0€</span></div>
<div class="cd"><span class="t">TMD Offerta - Facebook Ads</span><span class="k">Nessun task</span><span class="av"><svg width="25" height="25" viewBox="0 0 25 25"><circle cx="12.4" cy="9.3" r="3.15" fill="#9096ab"/><path d="M6.4,18.3 C6.4,15.2 8.8,14.0 12.4,14.0 C16.0,14.0 18.3,15.2 18.3,18.3 Z" fill="#9096ab"/></svg></span><span class="n">superfatty25@gmail.com</span><span class="p">0€</span></div>
<div class="cd"><span class="t">TMD Offerta - Facebook Ads</span><span class="k">Nessun task</span><span class="av"><svg width="25" height="25" viewBox="0 0 25 25"><circle cx="12.4" cy="9.3" r="3.15" fill="#9096ab"/><path d="M6.4,18.3 C6.4,15.2 8.8,14.0 12.4,14.0 C16.0,14.0 18.3,15.2 18.3,18.3 Z" fill="#9096ab"/></svg></span><span class="n">Studioavv.costa@gmail.com</span><span class="p">0€</span></div>
<div class="cd"><span class="t">TMD Offerta - Facebook Ads</span><span class="k">Nessun task</span><span class="av"><svg width="25" height="25" viewBox="0 0 25 25"><circle cx="12.4" cy="9.3" r="3.15" fill="#9096ab"/><path d="M6.4,18.3 C6.4,15.2 8.8,14.0 12.4,14.0 C16.0,14.0 18.3,15.2 18.3,18.3 Z" fill="#9096ab"/></svg></span><span class="n">mariapatrunno@gmail.com</span><span class="p">0€</span></div>
<div class="cd"><span class="t">TMD Offerta - Facebook Ads</span><span class="k">Nessun task</span><span class="av"><svg width="25" height="25" viewBox="0 0 25 25"><circle cx="12.4" cy="9.3" r="3.15" fill="#9096ab"/><path d="M6.4,18.3 C6.4,15.2 8.8,14.0 12.4,14.0 C16.0,14.0 18.3,15.2 18.3,18.3 Z" fill="#9096ab"/></svg></span><span class="n">carmeladiluca@gmail.com</span><span class="p">0€</span></div>
</div>
<div class="add" style="top:725px"><div class="ib"><svg width="12" height="12" viewBox="0 0 12 12" style="margin-right:3px;position:relative;top:-1px"><rect x="4.9" y="0" width="2.2" height="12" fill="#111"/><rect x="0" y="4.9" width="12" height="2.2" fill="#111"/></svg><span class="med" style="letter-spacing:0.28px">Aggiungi un'offerta</span></div></div>
</div>
</div></div>
<div id="sb" class="abs"></div>
</body></html>
